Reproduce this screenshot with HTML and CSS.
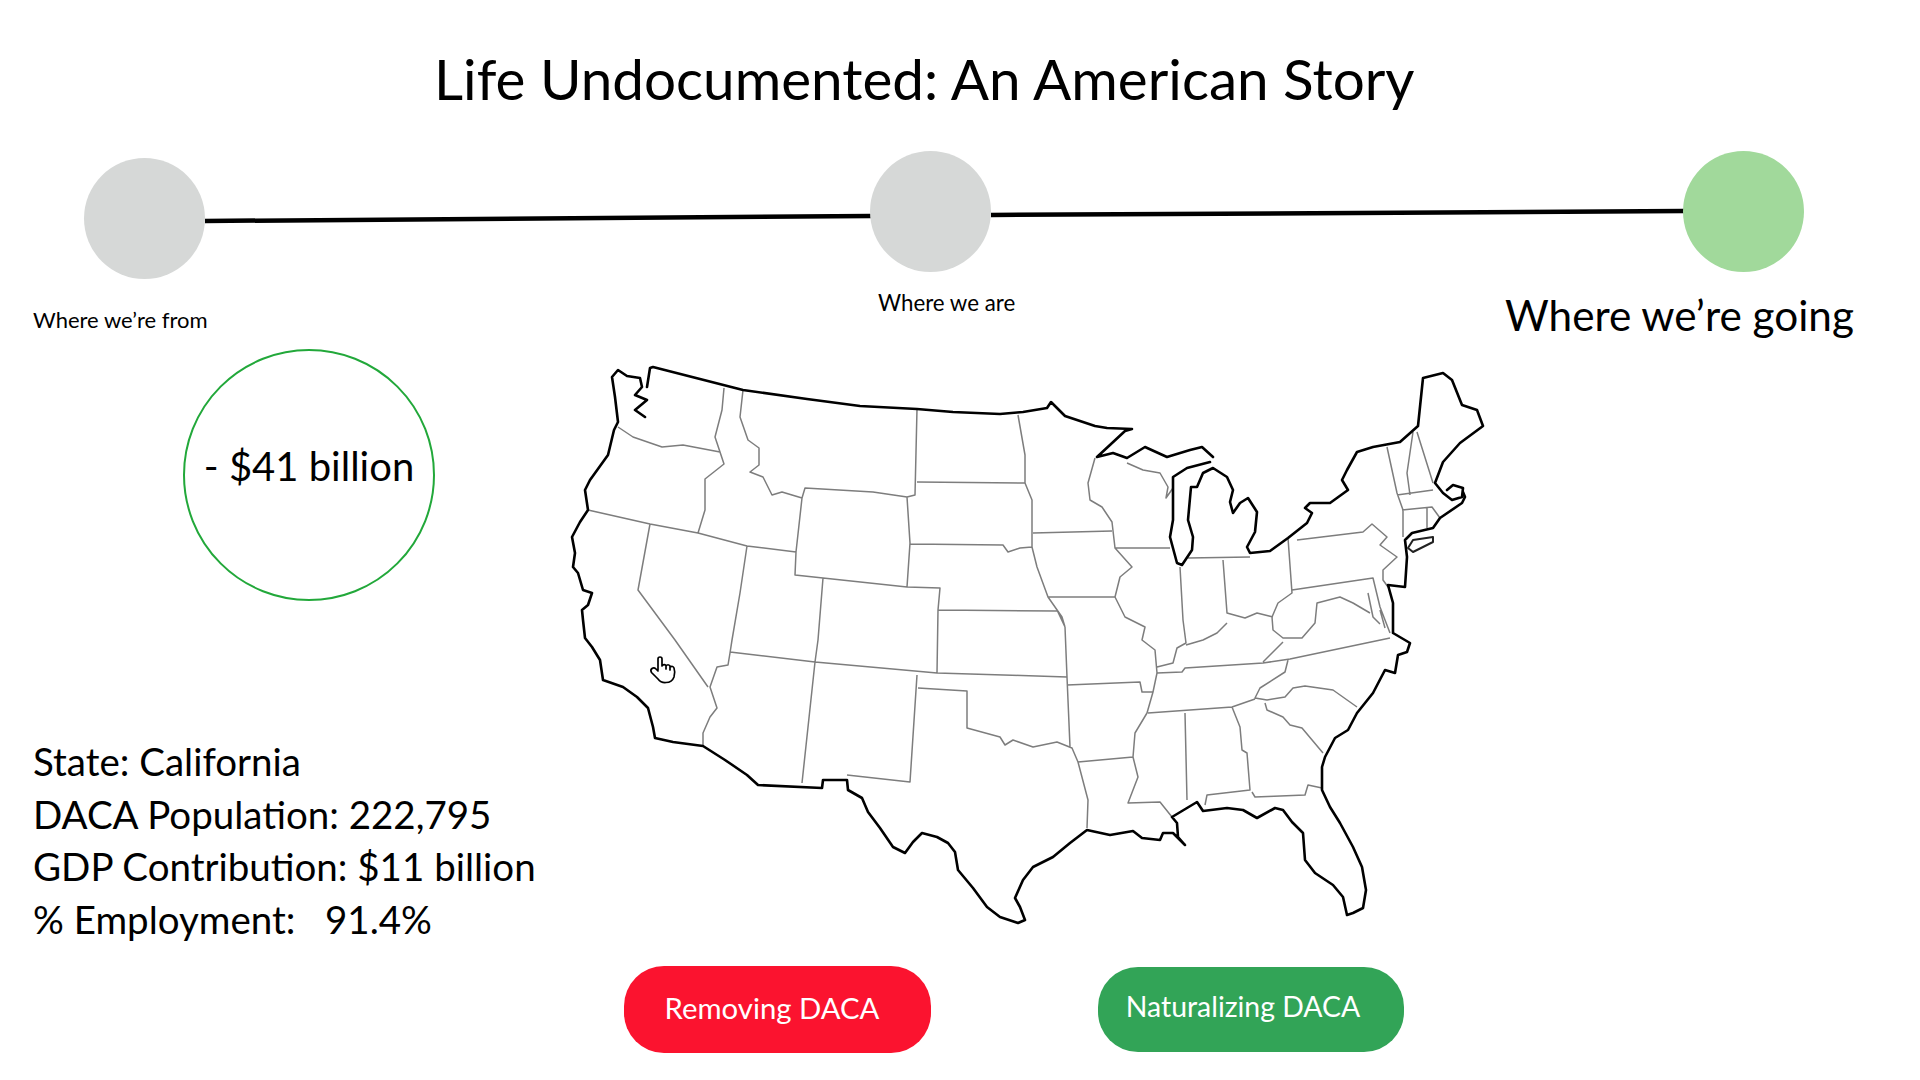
FILE: index.html
```html
<!DOCTYPE html>
<html lang="en">
<head>
<meta charset="utf-8">
<title>Life Undocumented: An American Story</title>
<link rel="stylesheet" href="styles.css">
</head>
<body>
<main class="page">
  <h1 class="title">Life Undocumented: An American Story</h1>

  <svg class="timeline" viewBox="0 150 1920 130" aria-hidden="true">
    <path class="timeline-line" d="M205 221L871 216M991 215L1684 211"/>
    <circle class="node node-past" cx="144.5" cy="218.5" r="60.5"/>
    <circle class="node node-past" cx="930.500" cy="211.5" r="60.5"/>
    <circle class="node node-future" cx="1743.500" cy="211.5" r="60.5"/>
  </svg>

  <div class="labels">
    <span class="label label-from">Where we’re from</span>
    <span class="label label-now">Where we are</span>
    <span class="label label-next">Where we’re going</span>
  </div>

  <div class="content">
    <section class="side">
      <div class="impact">- $41 billion</div>
      <div class="stats">
        <p>State: California</p>
        <p>DACA Population: 222,795</p>
        <p>GDP Contribution: $11 billion</p>
        <p>% Employment:   91.4%</p>
      </div>
    </section>

    <svg class="map" viewBox="560 345 960 620" aria-label="Map of the United States">
      <path class="border" d="M618 427L633 437L662 447L683 445L720 452M724 388L722 410L715 437L720 452L724 464L705 479L705 510L698 533M588 510L650 524L698 533L747 546L796 552M650 524L638 590L675 640L708 687M743 390L740 417L748 440L759 448L759 465L750 472L763 477L772 495L782 492L802 498M802 498L805 488L873 492L907 497L915 495L917 409M802 498L796 552L795 575L823 578L907 587M907 497L910 543L907 587L940 588L938 610L1057 611M917 482L1025 483M910 544L1003 545L1008 552L1020 548L1032 547M823 578L818 640L815 662M747 546L740 593L732 640L730 653L728 665L717 667L710 687L717 708L710 717L703 733L703 746M730 652L815 662L937 673L1067 677M815 662L802 783M938 610L937 673M917 675L910 782L847 775M918 688L967 691L967 728L1000 737L1005 745L1013 740L1033 747L1057 742L1072 748L1078 762L1088 800L1087 828M1067 685L1140 682L1142 692L1153 692L1147 713L1135 733L1133 757L1138 777L1128 803L1160 802L1172 817M1078 762L1133 757M1057 610L1065 627L1067 677L1070 747M1018 415L1025 455L1025 483L1032 500L1032 533L1032 547L1037 567L1048 597L1062 617L1065 627M1033 533L1112 531M1048 597L1115 597L1125 617L1145 627L1142 640L1155 650L1157 673L1153 692M1115 597L1120 577L1132 567L1115 548L1170 548M1095 458L1088 483L1090 500L1102 507L1112 522L1115 548M1127 463L1143 470L1160 473L1168 487L1166 498L1173 488M1180 567L1183 620L1186 643L1177 648L1173 663L1157 667M1188 558L1250 557M1223 560L1227 613L1245 618L1257 613L1273 617M1227 623L1217 633L1203 640L1186 645M1288 538L1292 593L1278 603L1272 617L1273 630L1283 638L1302 638L1315 623L1317 603L1340 597L1353 603L1370 613M1292 590L1373 578L1380 607L1390 633M1297 540L1363 532L1372 524L1387 537L1380 545L1397 557L1383 570L1383 580L1388 587M1387 447L1397 493L1403 510L1403 537M1397 495L1433 490M1402 510L1432 507L1440 518M1413 432L1407 473L1410 495M1417 432L1433 483M1427 508L1427 528M1157 673L1182 672L1185 668L1263 663L1290 659L1390 638M1263 662L1283 642M1288 660L1285 672L1260 688L1255 698L1267 700L1285 697L1293 688L1305 686L1333 690L1357 707M1148 713L1232 707L1255 699M1265 703L1267 710L1283 717L1290 725L1302 728L1323 753M1185 713L1187 800M1232 707L1240 727L1242 750L1247 753L1250 790L1207 795L1205 805M1252 792L1255 797L1305 795L1308 785L1322 788M1368 593L1373 617L1380 624M1380 610L1385 628"/>
      <path class="coast" d="M653 367L743 390L807 399L860 406L917 409L953 412L1000 414L1023 412L1047 408L1051 402L1065 416L1095 426L1107 428L1132 429L1125 431L1097 457L1113 453L1127 458L1145 447L1167 457L1190 450L1202 447L1213 457M1210 462L1187 468L1173 477L1173 490L1173 520L1170 537L1177 563L1182 565L1192 550L1193 537L1188 520L1191 487L1197 487L1203 473L1213 468L1227 477L1233 490L1230 502L1233 513L1240 503L1248 498L1257 512L1255 532L1247 547L1250 553L1270 551L1288 538L1307 523L1312 513L1305 508L1310 503L1330 503L1348 490L1342 480L1347 470L1357 452L1373 447L1400 442L1418 426L1423 378L1443 373L1452 380L1462 405L1477 410L1483 426L1460 443L1443 462L1435 483L1443 493L1452 500L1462 497L1463 488L1453 485L1447 490M1463 492L1465 497L1462 503L1440 518L1433 528L1412 533L1405 540L1407 557L1405 587L1388 585L1393 603L1393 633L1410 643L1407 652L1398 655L1395 673L1385 670L1373 693L1357 713L1348 730L1335 738L1325 757L1322 767L1322 790L1330 807L1340 823L1353 847L1362 867L1366 890L1363 908L1353 913L1347 915L1343 897L1333 885L1315 873L1305 860L1303 833L1292 822L1283 810L1275 808L1257 818L1243 810L1227 808L1203 811L1197 802L1187 808L1172 817L1177 823L1178 837L1185 845L1173 833L1163 833L1160 840L1142 838L1133 831L1110 835L1087 830L1070 843L1053 857L1033 867L1023 880L1015 898L1020 907L1025 920L1018 923L1000 917L987 907L973 888L958 870L955 852L948 843L937 837L922 833L913 842L905 853L893 847L880 828L868 812L862 798L848 790L847 780L823 780L822 788L758 785L747 775L725 760L703 746L673 742L655 738L653 727L648 708L637 697L623 687L603 680L600 660L592 647L585 638L583 620L582 610L588 605L592 593L583 590L578 573L573 567L575 553L572 537L580 522L588 510L585 490L590 480L608 455L614 430L618 422L615 397L612 377L618 370L627 376L640 378L642 387L635 395L647 400L635 410L645 417M647 387L650 368L653 367"/>
      <path class="coast-thin" d="M1408 548L1413 540L1433 537L1433 542L1413 552Z"/>
      <path class="cursor" d="M658 670V659Q658 657 660 657Q662 657 662 659V666Q664 663.5 666 665.5V669M666 666Q668 663.500 670 666V670M670 667Q673 665.500 674 668Q675.500 672 674 677Q672 682.500 666 682.500Q661 683 658 679L651.500 672.500Q650 670 652 668.500Q654 667 656 669L658 671"/>
    </svg>
  </div>

  <div class="actions">
    <button class="action action-remove">Removing DACA</button>
    <button class="action action-naturalize">Naturalizing DACA</button>
  </div>
</main>
</body>
</html>
```
FILE: styles.css
```css
* { box-sizing: border-box; }
html, body { margin: 0; padding: 0; background: #fff; }
body { font-family: Lato, "Open Sans", sans-serif; color: #000; }

.page { width: 1920px; height: 1080px; overflow: hidden; display: flex; flex-direction: column; }

.title {
  margin: 0;
  height: 150px;
  padding: 43px 0 0 434px;
  font-size: 56.600px;
  line-height: 70px;
  font-weight: 400;
  white-space: nowrap;
}

.timeline { display: block; width: 1920px; height: 130px; flex: none; }
.timeline-line { fill: none; stroke: #000; stroke-width: 4.500; }
.node-past { fill: #d6d8d7; }
.node-future { fill: #a1d99b; }

.labels { display: flex; height: 65px; flex: none; align-items: flex-start; }
.label { white-space: nowrap; }
.label-from { margin: 25px 0 0 33px; width: 845px; font-size: 22px; line-height: 30px; }
.label-now { margin: 8px 0 0 0; width: 627px; font-size: 22.300px; line-height: 30px; }
.label-next { margin: 10px 0 0 0; font-size: 42.300px; line-height: 50px; }

.content { display: grid; grid-template-columns: 560px 960px; height: 620px; flex: none; }
.side { display: flex; flex-direction: column; }
.impact {
  width: 252px;
  height: 252px;
  margin: 4px 0 0 183px;
  border: 2px solid #22a83a;
  border-radius: 50%;
  display: flex;
  align-items: center;
  justify-content: center;
  padding-bottom: 18px;
  font-size: 40px;
  white-space: nowrap;
}
.stats { margin: 134px 0 0 33px; font-size: 38.500px; line-height: 52.700px; }
.stats p { margin: 0; white-space: pre; }

.map { display: block; width: 960px; height: 620px; filter: blur(0.35px); }
.border { fill: none; stroke: #7d7d7d; stroke-width: 1.500; stroke-linejoin: round; }
.coast { fill: none; stroke: #000; stroke-width: 2.600; stroke-linejoin: round; stroke-linecap: round; }
.coast-thin { fill: none; stroke: #222; stroke-width: 2; stroke-linejoin: round; }
.cursor { fill: none; stroke: #000; stroke-width: 1.700; stroke-linecap: round; stroke-linejoin: round; }

.actions { display: flex; align-items: center; padding: 0 0 0 624px; gap: 167px; }
.action {
  border: 0;
  color: #fff;
  font-family: inherit;
  display: flex;
  align-items: center;
  justify-content: center;
  border-radius: 40px;
}
.action-remove { width: 307px; height: 87px; background: #fb132f; margin-top: 1px; font-size: 29.300px; padding: 0 11px 4px 0; }
.action-naturalize { width: 306px; height: 85px; background: #32a457; font-size: 28.400px; padding: 0 16px 7px 0; }
```
